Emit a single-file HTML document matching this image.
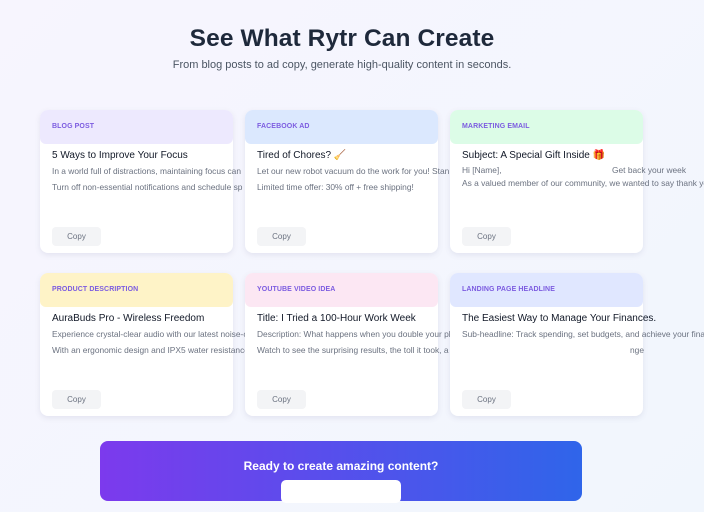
<!DOCTYPE html>
<html><head><style>
*{margin:0;padding:0;box-sizing:border-box}
html,body{width:704px;height:512px;overflow:hidden}
body{background:linear-gradient(135deg,#f7f5fe,#f1f6fd);font-family:"Liberation Sans","DejaVu Sans",sans-serif;position:relative}
h1{position:absolute;top:25px;left:0;width:684px;text-align:center;font-size:24.5px;font-weight:bold;color:#1e293b;letter-spacing:0.1px}
.sub{position:absolute;top:59px;left:0;width:684px;text-align:center;font-size:11px;color:#4b5563}
.card{position:absolute;width:193px;height:143px;background:#fff;border-radius:8px;box-shadow:0 2px 6px rgba(100,100,140,.12)}
.hd{height:34px;border-radius:8px 8px 6px 6px;padding:13px 12px 0;font-size:7px;font-weight:bold;color:#7c5ce0;letter-spacing:.1px}
.t{margin:6px 0 0 12px;font-size:10px;color:#111827;white-space:nowrap}
.l{margin:4px 0 0 12px;font-size:8.4px;color:#6b7280;white-space:nowrap;line-height:12px}
.btn{position:absolute;left:12px;top:117px;width:49px;height:19px;background:#f3f4f6;border-radius:4px;font-size:8px;color:#6b7280;text-align:center;line-height:19px}
.cta{position:absolute;left:100px;top:441px;width:482px;height:60px;border-radius:8px;background:linear-gradient(90deg,#7c3aed,#2f65ea)}
.cta p{text-align:center;color:#fff;font-weight:bold;font-size:12px;margin-top:18px}
.wb{position:absolute;left:181px;top:39px;width:120px;height:23px;background:#fff;border-radius:5px}
</style></head><body>
<h1>See What Rytr Can Create</h1>
<div class="sub">From blog posts to ad copy, generate high-quality content in seconds.</div>

<div class="card" style="left:40px;top:110px"><div class="hd" style="background:#ede9fe">BLOG POST</div>
<div class="t">5 Ways to Improve Your Focus</div>
<div class="l">In a world full of distractions, maintaining focus can</div>
<div class="l">Turn off non-essential notifications and schedule sp</div>
<div class="btn">Copy</div></div>

<div class="card" style="left:245px;top:110px"><div class="hd" style="background:#dbe8fe">FACEBOOK AD</div>
<div class="t">Tired of Chores? 🧹</div>
<div class="l">Let our new robot vacuum do the work for you! Stan</div>
<div class="l">Limited time offer: 30% off + free shipping!</div>
<div class="btn">Copy</div></div>

<div class="card" style="left:450px;top:110px"><div class="hd" style="background:#dcfce7">MARKETING EMAIL</div>
<div class="t">Subject: A Special Gift Inside 🎁</div>
<div class="l" style="margin-top:3px;position:relative">Hi [Name],<span style="position:absolute;left:150px">Get back your week</span></div>
<div class="l" style="margin-top:1px">As a valued member of our community, we wanted to say thank you</div>
<div class="btn">Copy</div></div>

<div class="card" style="left:40px;top:273px"><div class="hd" style="background:#fef3c7">PRODUCT DESCRIPTION</div>
<div class="t">AuraBuds Pro - Wireless Freedom</div>
<div class="l">Experience crystal-clear audio with our latest noise-c</div>
<div class="l">With an ergonomic design and IPX5 water resistance</div>
<div class="btn">Copy</div></div>

<div class="card" style="left:245px;top:273px"><div class="hd" style="background:#fce7f3">YOUTUBE VIDEO IDEA</div>
<div class="t">Title: I Tried a 100-Hour Work Week</div>
<div class="l">Description: What happens when you double your pl</div>
<div class="l">Watch to see the surprising results, the toll it took, a</div>
<div class="btn">Copy</div></div>

<div class="card" style="left:450px;top:273px"><div class="hd" style="background:#e0e7ff">LANDING PAGE HEADLINE</div>
<div class="t">The Easiest Way to Manage Your Finances.</div>
<div class="l">Sub-headline: Track spending, set budgets, and achieve your financi</div>
<div class="l" style="position:relative">&nbsp;<span style="position:absolute;left:168px">nge</span></div>
<div class="btn">Copy</div></div>

<div class="cta"><p>Ready to create amazing content?</p><div class="wb"></div></div>
</body></html>
